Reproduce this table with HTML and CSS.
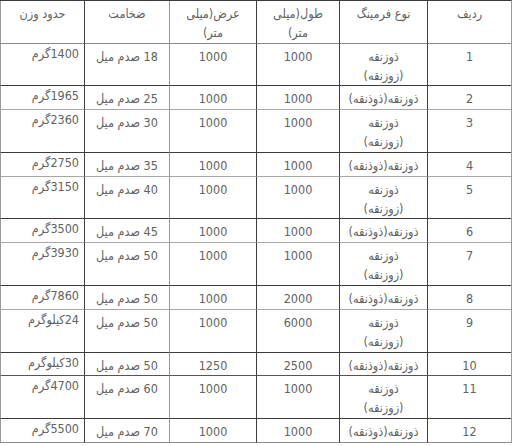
FILE: index.html
```html
<!DOCTYPE html>
<html lang="fa" dir="rtl">
<head>
<meta charset="utf-8">
<title>جدول فرمینگ</title>
<link rel="stylesheet" href="styles.css">
</head>
<body>
<table class="spec">
  <thead>
    <tr class="hd">
      <th class="c-row">ردیف</th>
      <th class="c-type">نوع فرمینگ</th>
      <th class="c-len">طول(میلی<br>متر)</th>
      <th class="c-wid">عرض(میلی<br>متر)</th>
      <th class="c-thk">ضخامت</th>
      <th class="c-wt">حدود وزن</th>
    </tr>
  </thead>
  <tbody>
    <tr class="d"><td>1</td><td>ذوزنقه<br>(زوزنقه)</td><td>1000</td><td class="c-wid">1000</td><td>18 صدم میل</td><td class="c-wt">1400گرم</td></tr>
    <tr class="s"><td>2</td><td>ذوزنقه(ذوذنقه)</td><td>1000</td><td class="c-wid">1000</td><td>25 صدم میل</td><td class="c-wt">1965گرم</td></tr>
    <tr class="d"><td>3</td><td>ذوزنقه<br>(زوزنقه)</td><td>1000</td><td class="c-wid">1000</td><td>30 صدم میل</td><td class="c-wt">2360گرم</td></tr>
    <tr class="s"><td>4</td><td>ذوزنقه(ذوذنقه)</td><td>1000</td><td class="c-wid">1000</td><td>35 صدم میل</td><td class="c-wt">2750گرم</td></tr>
    <tr class="d"><td>5</td><td>ذوزنقه<br>(زوزنقه)</td><td>1000</td><td class="c-wid">1000</td><td>40 صدم میل</td><td class="c-wt">3150گرم</td></tr>
    <tr class="s"><td>6</td><td>ذوزنقه(ذوذنقه)</td><td>1000</td><td class="c-wid">1000</td><td>45 صدم میل</td><td class="c-wt">3500گرم</td></tr>
    <tr class="d"><td>7</td><td>ذوزنقه<br>(زوزنقه)</td><td>1000</td><td class="c-wid">1000</td><td>50 صدم میل</td><td class="c-wt">3930گرم</td></tr>
    <tr class="s"><td>8</td><td>ذوزنقه(ذوذنقه)</td><td>2000</td><td class="c-wid">1000</td><td>50 صدم میل</td><td class="c-wt">7860گرم</td></tr>
    <tr class="d"><td>9</td><td>ذوزنقه<br>(زوزنقه)</td><td>6000</td><td class="c-wid">1000</td><td>50 صدم میل</td><td class="c-wt">24کیلوگرم</td></tr>
    <tr class="s mid"><td>10</td><td>ذوزنقه(ذوذنقه)</td><td>2500</td><td class="c-wid">1250</td><td>50 صدم میل</td><td class="c-wt">30کیلوگرم</td></tr>
    <tr class="d"><td>11</td><td>ذوزنقه<br>(زوزنقه)</td><td>1000</td><td class="c-wid">1000</td><td>60 صدم میل</td><td class="c-wt">4700گرم</td></tr>
    <tr class="s"><td>12</td><td>ذوزنقه(ذوذنقه)</td><td>1000</td><td class="c-wid">1000</td><td>70 صدم میل</td><td class="c-wt">5500گرم</td></tr>
  </tbody>
</table>
</body>
</html>
```
FILE: styles.css
```css
html, body {
  margin: 0;
  padding: 0;
  background: #ffffff;
}

.spec {
  width: 512px;
  table-layout: fixed;
  border-collapse: separate;
  border-spacing: 0;
  border-top: 1px solid #3c3c3c;
  border-right: 1px solid #9a9a9a;
  font-family: "DejaVu Sans Condensed", "DejaVu Sans", sans-serif;
  font-size: 12.5px;
  line-height: 18.85px;
  color: #626262;
}

.spec th,
.spec td {
  box-sizing: border-box;
  padding: 4px 3px 0 3px;
  border-left: 1px solid #3c3c3c;
  border-bottom: 1px solid #3c3c3c;
  text-align: center;
  vertical-align: top;
  font-weight: normal;
}

.spec th.c-row { width: 84px; }
.spec th.c-type { width: 88px; }
.spec th.c-len { width: 83px; }
.spec th.c-wid { width: 87px; }
.spec th.c-thk { width: 85px; }
.spec th.c-wt { width: 84px; }

.spec .c-wid { border-left-color: #9a9a9a; }
.spec .c-wt { border-left-color: #9a9a9a; }

.spec td.c-wt {
  text-align: right;
  padding: 1px 5px 3px 2px;
}

.spec tr.hd th { border-bottom-color: #888888; }
.spec tr.s td { border-bottom-color: #a8a8a8; }
.spec tr.s.mid td { border-bottom-color: #555555; }
.spec tr:last-child td { border-bottom-color: #8a8a8a; }
```
